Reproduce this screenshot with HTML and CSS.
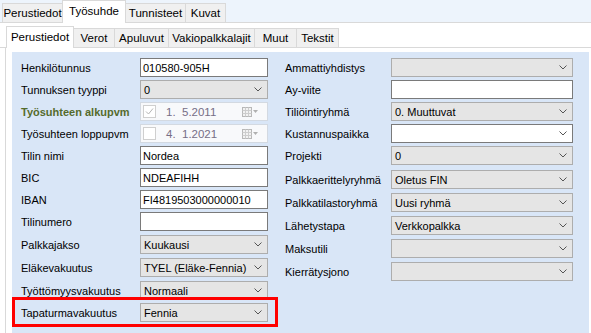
FILE: index.html
```html
<!DOCTYPE html>
<html lang="fi">
<head>
  <meta charset="UTF-8" />
  <title>Työsuhde</title>
  <link rel="stylesheet" href="styles.css">
</head>
<body>
  <div class="tabs outer">
    <div class="tab">Perustiedot</div>
    <div class="tab active">Työsuhde</div>
    <div class="tab">Tunnisteet</div>
    <div class="tab">Kuvat</div>
  </div>

  <div class="page">
    <div class="tabs inner">
      <div class="tab active">Perustiedot</div>
      <div class="tab">Verot</div>
      <div class="tab">Apuluvut</div>
      <div class="tab">Vakiopalkkalajit</div>
      <div class="tab">Muut</div>
      <div class="tab">Tekstit</div>
    </div>

    <div class="subpage">
      <div class="panel">
        <!-- left column -->
        <div class="col left">
          <div class="row"><span class="lbl">Henkilötunnus</span><span class="field">010580-905H</span></div>
          <div class="row"><span class="lbl">Tunnuksen tyyppi</span><span class="field combo">0<svg class="chev" width="8" height="5"><polyline points="0.5,0.5 4,4 7.5,0.5" /></svg></span></div>
          <div class="row"><span class="lbl bold">Työsuhteen alkupvm</span>
            <span class="field date">
              <span class="check"><svg width="11" height="11"><polyline points="2,5.5 4.5,8 9,2.5" /></svg></span>
              <span class="dtext">1.  5.2011</span>
              <svg class="cal" width="16" height="10"><rect x="0.5" y="0.5" width="9" height="9" /><path d="M0.5 3.5h9M0.5 6.5h9M3.5 0.5v9M6.5 0.5v9" /><polygon points="11,3 16,3 13.5,6" /></svg>
            </span>
          </div>
          <div class="row"><span class="lbl">Työsuhteen loppupvm</span>
            <span class="field date">
              <span class="check"></span>
              <span class="dtext">4.  1.2021</span>
              <svg class="cal" width="16" height="10"><rect x="0.5" y="0.5" width="9" height="9" /><path d="M0.5 3.5h9M0.5 6.5h9M3.5 0.5v9M6.5 0.5v9" /><polygon points="11,3 16,3 13.5,6" /></svg>
            </span>
          </div>
          <div class="row"><span class="lbl">Tilin nimi</span><span class="field">Nordea</span></div>
          <div class="row"><span class="lbl">BIC</span><span class="field">NDEAFIHH</span></div>
          <div class="row"><span class="lbl">IBAN</span><span class="field">FI4819503000000010</span></div>
          <div class="row"><span class="lbl">Tilinumero</span><span class="field"></span></div>
          <div class="row loose"><span class="lbl">Palkkajakso</span><span class="field combo">Kuukausi<svg class="chev" width="8" height="5"><polyline points="0.5,0.5 4,4 7.5,0.5" /></svg></span></div>
          <div class="row loose"><span class="lbl">Eläkevakuutus</span><span class="field combo">TYEL (Eläke-Fennia)<svg class="chev" width="8" height="5"><polyline points="0.5,0.5 4,4 7.5,0.5" /></svg></span></div>
          <div class="row loose"><span class="lbl">Työttömyysvakuutus</span><span class="field combo">Normaali<svg class="chev" width="8" height="5"><polyline points="0.5,0.5 4,4 7.5,0.5" /></svg></span></div>
          <div class="row marked"><span class="lbl">Tapaturmavakuutus</span><span class="field combo">Fennia<svg class="chev" width="8" height="5"><polyline points="0.5,0.5 4,4 7.5,0.5" /></svg></span></div>
        </div>

        <!-- right column -->
        <div class="col right">
          <div class="row"><span class="lbl">Ammattiyhdistys</span><span class="field combo"><svg class="chev" width="8" height="5"><polyline points="0.5,0.5 4,4 7.5,0.5" /></svg></span></div>
          <div class="row"><span class="lbl">Ay-viite</span><span class="field"></span></div>
          <div class="row"><span class="lbl">Tiliöintiryhmä</span><span class="field combo">0. Muuttuvat<svg class="chev" width="8" height="5"><polyline points="0.5,0.5 4,4 7.5,0.5" /></svg></span></div>
          <div class="row"><span class="lbl">Kustannuspaikka</span><span class="field combo editable"><svg class="chev" width="8" height="5"><polyline points="0.5,0.5 4,4 7.5,0.5" /></svg></span></div>
          <div class="row"><span class="lbl">Projekti</span><span class="field combo">0<svg class="chev" width="8" height="5"><polyline points="0.5,0.5 4,4 7.5,0.5" /></svg></span></div>
          <div class="row looser"><span class="lbl">Palkkaerittelyryhmä</span><span class="field combo">Oletus FIN<svg class="chev" width="8" height="5"><polyline points="0.5,0.5 4,4 7.5,0.5" /></svg></span></div>
          <div class="row loose"><span class="lbl">Palkkatilastoryhmä</span><span class="field combo">Uusi ryhmä<svg class="chev" width="8" height="5"><polyline points="0.5,0.5 4,4 7.5,0.5" /></svg></span></div>
          <div class="row loose"><span class="lbl">Lähetystapa</span><span class="field combo">Verkkopalkka<svg class="chev" width="8" height="5"><polyline points="0.5,0.5 4,4 7.5,0.5" /></svg></span></div>
          <div class="row loose"><span class="lbl">Maksutili</span><span class="field combo"><svg class="chev" width="8" height="5"><polyline points="0.5,0.5 4,4 7.5,0.5" /></svg></span></div>
          <div class="row loose"><span class="lbl">Kierrätysjono</span><span class="field combo"><svg class="chev" width="8" height="5"><polyline points="0.5,0.5 4,4 7.5,0.5" /></svg></span></div>
        </div>
      </div>
    </div>
  </div>
</body>
</html>
```

FILE: styles.css
```css
* {
  box-sizing: border-box;
}
body {
  margin: 0;
  height: 100vh;
  overflow: hidden;
  background: #edf4fc;
  font-family: 'Liberation Sans', Arial, sans-serif;
  font-size: 11px;
  color: #000;
  display: flex;
  flex-direction: column;
}

/* tab strips */
.tabs {
  display: flex;
  align-items: flex-end;
  border-bottom: 1px solid #d9d9d9;
}
.tab {
  background: #f0f0f0;
  border: 1px solid #d9d9d9;
  border-bottom: none;
  text-align: center;
  white-space: nowrap;
  margin-right: -1px;
}
.tab.active {
  background: #fff;
  margin-bottom: -1px;
}

.outer {
  height: 23px;
  padding-left: 2px;
}
.outer .tab { height: 19px; line-height: 18px; font-size: 11.5px; }
.outer .tab.active { height: 23px; line-height: 21px; }
.outer .tab:nth-child(1) { width: 61px; }
.outer .tab:nth-child(2) { width: 64px; }
.outer .tab:nth-child(3) { width: 61px; }
.outer .tab:nth-child(4) { width: 41px; }

.page {
  flex: 1;
  background: #fff;
  display: flex;
  flex-direction: column;
}

.inner {
  height: 25px;
  padding-left: 6px;
}
.inner .tab { height: 19px; line-height: 18px; font-size: 11.5px; }
.inner .tab.active { height: 22px; line-height: 21px; }
.inner .tab:nth-child(1) { width: 68px; }
.inner .tab:nth-child(2) { width: 42px; }
.inner .tab:nth-child(3) { width: 55px; }
.inner .tab:nth-child(4) { width: 87px; }
.inner .tab:nth-child(5) { width: 43px; }
.inner .tab:nth-child(6) { width: 43px; }

.subpage {
  flex: 1;
  border-left: 1px solid #d9d9d9;
  margin-left: 5px;
  padding: 4px 2px 0 6px;
  display: flex;
}

/* blue form panel */
.panel {
  flex: 1;
  background: #d9e6f7;
  padding-top: 6px;
  display: flex;
}
.col { display: flex; flex-direction: column; }
.col.left { width: 268px; padding-left: 9px; }
.col.right { width: 293px; padding-left: 5px; }
.col.left .lbl { width: 119px; }
.col.left .field { width: 128px; }
.col.right .lbl { width: 106px; }
.col.right .field { width: 182px; }

.row {
  display: flex;
  align-items: center;
  height: 19px;
  margin-top: 3px;
}
.row:first-child { margin-top: 0; }
.row.loose { margin-top: 4px; }
.row.looser { margin-top: 5px; }

.lbl {
  white-space: nowrap;
}
.lbl.bold {
  font-weight: bold;
  color: #556b2c;
}

.field {
  height: 19px;
  border: 1px solid #7a7a7a;
  background: #fff;
  padding-left: 2px;
  display: flex;
  align-items: center;
  white-space: nowrap;
}
.combo {
  background: #e5e5e5;
  border-color: #adadad;
  padding: 0 5px 0 3px;
}
.combo.editable {
  background: #fff;
  border-color: #7a7a7a;
}
.chev {
  margin-left: auto;
  fill: none;
  stroke: #555;
  stroke-width: 1;
}

/* date pickers */
.date {
  background: #f8f9fb;
  border-color: #d3d9e1;
  padding: 0 9px 0 2px;
}
.check {
  width: 13px;
  height: 13px;
  border: 1px solid #cfcfcf;
  background: #fff;
  display: flex;
}
.check svg {
  fill: none;
  stroke: #b5b5b5;
  stroke-width: 1;
}
.dtext {
  margin-left: 10px;
  color: #766e86;
  font-size: 11.5px;
  white-space: pre;
}
.cal {
  margin-left: auto;
}
.cal rect { fill: #f2f2f2; stroke: #b8b8b8; }
.cal path { stroke: #cdcdcd; fill: none; }
.cal polygon { fill: #b0b0b0; }

/* highlight annotation over the row */
.marked {
  position: relative;
}
.marked::after {
  content: "";
  position: absolute;
  left: -9px;
  right: 2px;
  top: -6px;
  bottom: -5px;
  border: 3px solid #f00;
}
```
